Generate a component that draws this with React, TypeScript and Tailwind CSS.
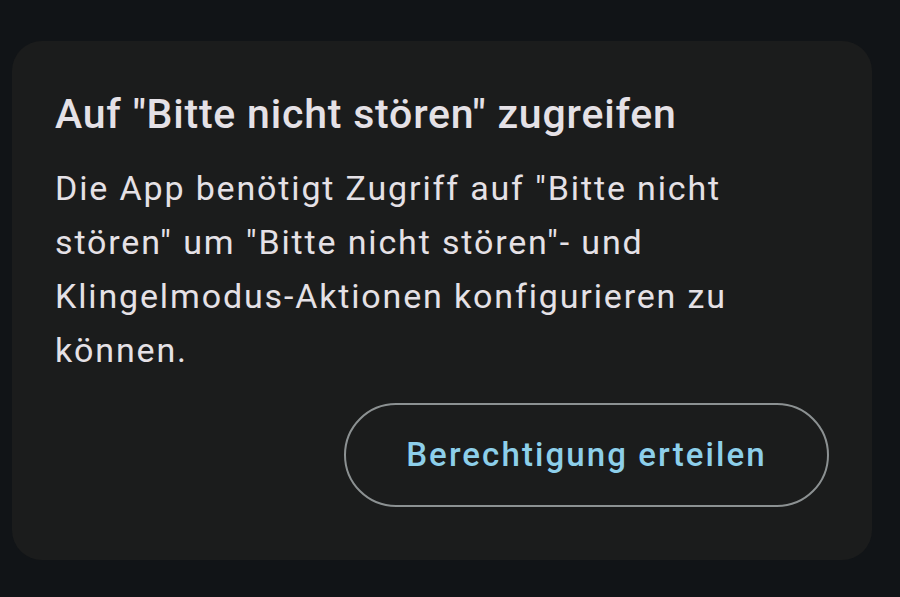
import React from "react";

export default function App() {
  return (
    <div
      className="w-[900px] h-[597px] bg-[#111417] pt-[41px] px-[12px] overflow-hidden"
      style={{ fontFamily: "Roboto, 'Noto Sans', sans-serif" }}
    >
      <div className="w-[860px] h-[519px] rounded-[30px] bg-[#1b1c1c] pl-[43px] pr-[43px] pt-[49px]">
        <h1 className="text-[41px] leading-[48px] font-medium text-[#e5e1e6] tracking-[0.8px] whitespace-nowrap">
          Auf "Bitte nicht stören" zugreifen
        </h1>
        <p className="mt-[23px] text-[34px] leading-[54px] text-[#e5e1e6] tracking-[1.85px] w-[774px]">
          Die App benötigt Zugriff auf "Bitte nicht stören" um "Bitte nicht stören"- und Klingelmodus-Aktionen konfigurieren zu können.
        </p>
        <div className="flex justify-end mt-[26px]">
          <button className="h-[104px] w-[485px] rounded-full border-2 border-[#8c9192] text-[#8dcfea] text-[33px] font-medium tracking-[2.1px] flex items-center justify-center">
            Berechtigung erteilen
          </button>
        </div>
      </div>
    </div>
  );
}
